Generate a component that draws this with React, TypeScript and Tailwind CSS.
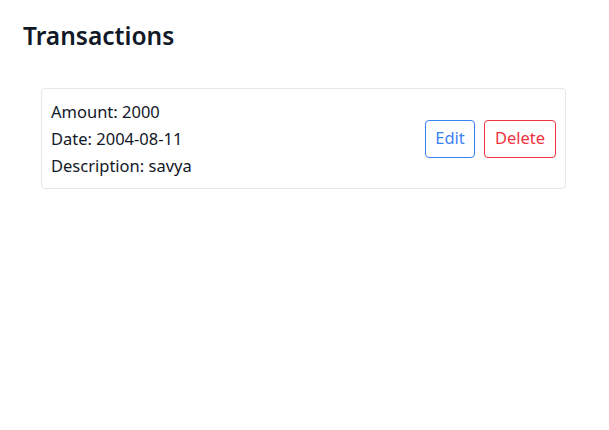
export default function App() {
  return (
    <div className="min-h-screen bg-white pl-[23px] pr-[23px] pt-[20px]" style={{ fontFamily: '"Noto Sans", "Open Sans", sans-serif' }}>
      <h2 className="text-[24.5px] font-semibold leading-[32px] text-[#111827]">Transactions</h2>
      <div className="mt-[36px] ml-[18px] mr-[20px] flex items-center justify-between rounded-[4px] border border-[#e5e7eb] px-[9px] py-[9px]">
        <div className="text-[16.5px] leading-[27px] text-[#111827]">
          <div>Amount: 2000</div>
          <div>Date: 2004-08-11</div>
          <div>Description: savya</div>
        </div>
        <div className="flex gap-[9px]">
          <button className="h-[38px] w-[50px] rounded-[4px] border border-[#3b82f6] text-[16.5px] text-[#3b82f6]">Edit</button>
          <button className="h-[38px] w-[72px] rounded-[4px] border border-[#ef3340] text-[16.5px] text-[#ef3340]">Delete</button>
        </div>
      </div>
    </div>
  );
}
